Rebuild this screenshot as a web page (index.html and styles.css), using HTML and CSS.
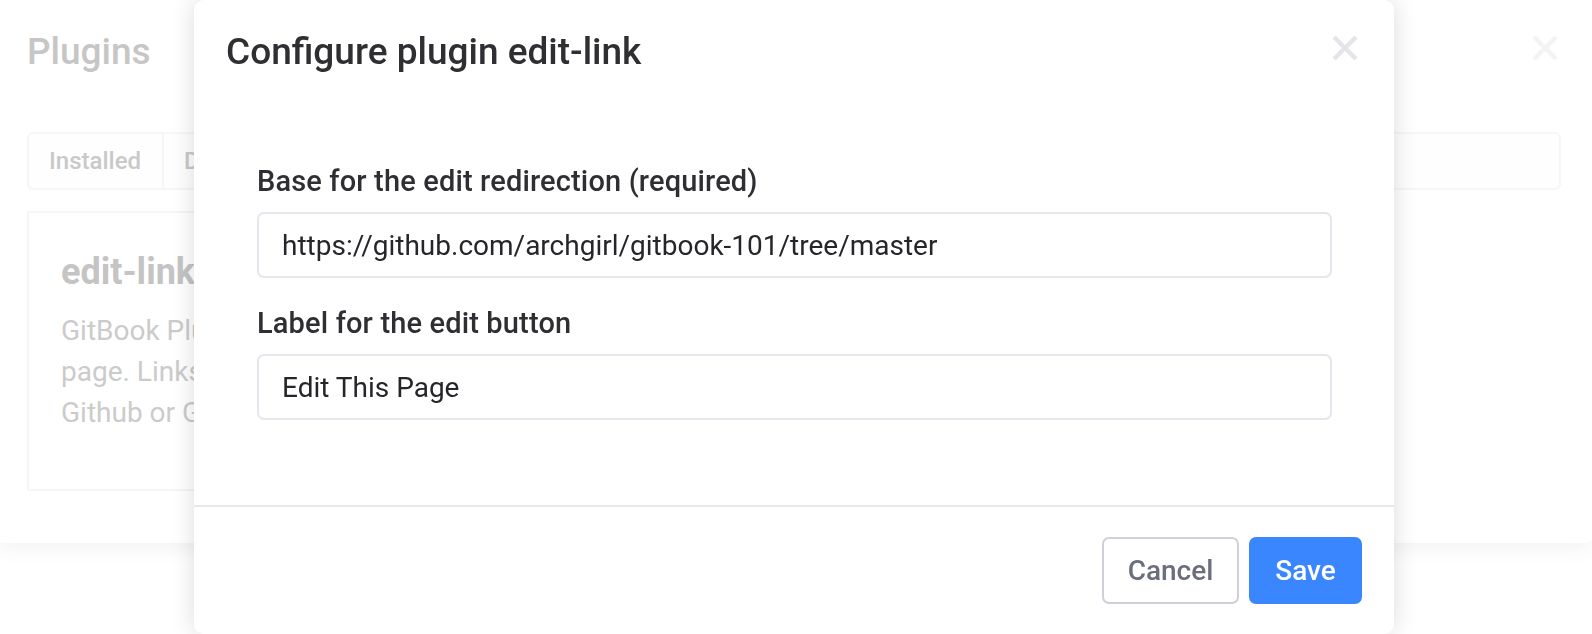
FILE: index.html
```html
<!DOCTYPE html>
<html lang="en">
<head>
<meta charset="utf-8">
<title>Configure plugin edit-link</title>
<link rel="stylesheet" href="styles.css">
</head>
<body>
  <div class="bg-modal">
    <div class="bg-header">
      <h1 class="bg-title">Plugins</h1>
      <span class="close close-faint" aria-hidden="true">
        <svg viewBox="0 0 26 26" width="26" height="26"><path d="M2 2 L24 24 M24 2 L2 24" stroke="currentColor" stroke-width="4.5" fill="none"/></svg>
      </span>
    </div>
    <div class="tabs">
      <span class="tab">Installed</span>
      <span class="tab">Discover</span>
    </div>
    <div class="cards">
      <div class="card">
        <h2 class="card-title">edit-link</h2>
        <p class="card-desc">GitBook Plugin to add<br>page. Links to the<br>Github or GitLab.</p>
      </div>
    </div>
  </div>

  <div class="modal" role="dialog">
    <div class="modal-header">
      <h1 class="modal-title">Configure plugin edit-link</h1>
      <span class="close close-front" aria-hidden="true">
        <svg viewBox="0 0 26 26" width="26" height="26"><path d="M2 2 L24 24 M24 2 L2 24" stroke="currentColor" stroke-width="4.5" fill="none"/></svg>
      </span>
    </div>
    <div class="modal-body">
      <div class="field">
        <label class="label">Base for the edit redirection (required)</label>
        <div class="input">https://github.com/archgirl/gitbook-101/tree/master</div>
      </div>
      <div class="field">
        <label class="label">Label for the edit button</label>
        <div class="input">Edit This Page</div>
      </div>
    </div>
    <div class="modal-footer">
      <button class="btn btn-cancel">Cancel</button>
      <button class="btn btn-save">Save</button>
    </div>
  </div>
</body>
</html>
```

FILE: styles.css
```css
* { box-sizing: border-box; }

html, body {
  margin: 0;
  padding: 0;
  background: #ffffff;
  font-family: Roboto, "Liberation Sans", sans-serif;
  overflow: hidden;
  width: 1592px;
  height: 634px;
}

/* background dialog (faded behind backdrop) */
.bg-modal {
  margin-left: -5px;
  width: 1600px;
  height: 543px;
  background: #fff;
  border-radius: 0 0 10px 10px;
  box-shadow: 0 4px 22px rgba(0, 0, 0, 0.06);
  padding: 0 34px 0 32px;
}

.bg-header {
  height: 100px;
  padding-top: 3px;
  display: flex;
  align-items: center;
  justify-content: space-between;
}

.bg-title {
  margin: 0;
  font-size: 37px;
  font-weight: 500;
  line-height: 44px;
  color: #c6c6c6;
}

.close {
  display: flex;
  width: 26px;
  height: 26px;
}

.close-faint {
  color: #f3f3f5;
  margin-right: 3px;
  margin-top: -7px;
}

.tabs {
  margin-top: 32px;
  height: 58px;
  border: 2px solid #f6f6f6;
  border-radius: 6px;
  display: flex;
  background: #fefefe;
}

.tab {
  display: flex;
  align-items: center;
  padding: 0 21px 0 20px;
  font-size: 24px;
  font-weight: 500;
  color: #c9c9c9;
  border-right: 2px solid #f6f6f6;
}

.cards {
  margin-top: 21px;
  display: flex;
}

.card {
  width: 470px;
  height: 280px;
  border: 2px solid #f6f6f6;
  padding: 37px 32px 0 32px;
}

.card-title {
  margin: 0;
  width: 133px;
  overflow: hidden;
  white-space: nowrap;
  font-size: 36px;
  font-weight: 700;
  color: #c4c4c4;
  line-height: 44px;
}

.card-desc {
  margin: 16px 0 0 0;
  width: 133px;
  overflow: hidden;
  font-size: 28px;
  line-height: 41px;
  color: #cbcbcb;
  white-space: nowrap;
}

/* front dialog */
.modal {
  position: fixed;
  left: 194px;
  top: 0;
  width: 1200px;
  height: 634px;
  background: #fff;
  border-radius: 10px;
  box-shadow: 0 0 24px rgba(0, 0, 0, 0.14);
  display: flex;
  flex-direction: column;
}

.modal-header {
  height: 100px;
  padding: 3px 36px 0 32px;
  display: flex;
  align-items: center;
  justify-content: space-between;
}

.modal-title {
  margin: 0;
  font-size: 37px;
  font-weight: 500;
  line-height: 44px;
  color: #2f2f33;
}

.close-front {
  color: #e4e5ea;
  margin-top: -7px;
}

.modal-body {
  padding: 63px 62px 0 63px;
  height: 407px;
  border-bottom: 2px solid #e8e8ee;
  display: flex;
  flex-direction: column;
  gap: 27px;
}

.field {
  display: flex;
  flex-direction: column;
}

.label {
  font-size: 29px;
  font-weight: 500;
  line-height: 36px;
  color: #2f2f33;
  margin-bottom: 13px;
  letter-spacing: 0.15px;
}

.input {
  height: 66px;
  border: 2px solid #e6e7ec;
  border-radius: 7px;
  padding: 0 23px;
  display: flex;
  align-items: center;
  font-size: 28px;
  color: #26262a;
}

.modal-footer {
  flex: 1;
  display: flex;
  justify-content: flex-end;
  align-items: flex-start;
  gap: 10px;
  padding: 30px 32px 0 32px;
}

.btn {
  height: 67px;
  font-family: Roboto, "Liberation Sans", sans-serif;
  font-size: 28px;
  font-weight: 500;
  border-radius: 7px;
  cursor: pointer;
  padding: 0;
}

.btn-cancel {
  width: 137px;
  background: #fff;
  border: 2px solid #cdd0d8;
  color: #6b6f7c;
}

.btn-save {
  width: 113px;
  background: #3a86ff;
  border: 2px solid #3a86ff;
  color: #fff;
}
```
